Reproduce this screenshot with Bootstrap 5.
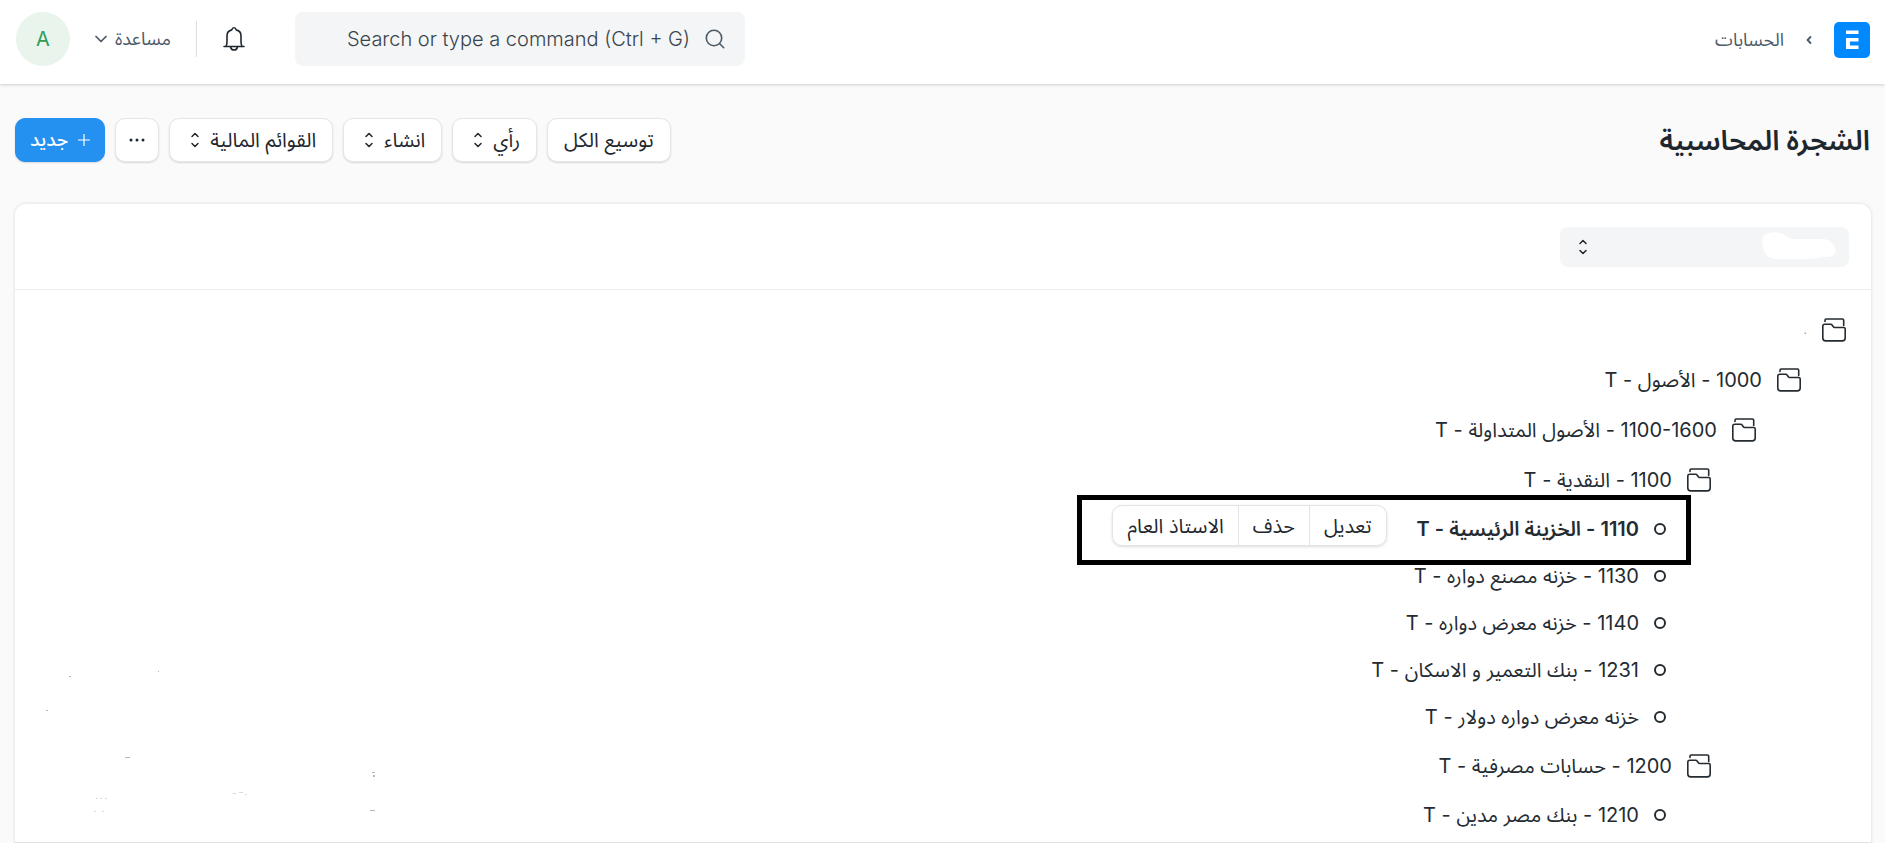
<!DOCTYPE html>
<html lang="ar" dir="rtl">
<head>
<meta charset="utf-8">
<meta name="viewport" content="width=device-width, initial-scale=1">
<title>الشجرة المحاسبية</title>
<link href="https://cdn.jsdelivr.net/npm/bootstrap@5.3.0/dist/css/bootstrap.min.css" rel="stylesheet">
<style>
  :root { --ink: #1f272e; --soft: #f4f5f6; --line: #ebeef0; }
  body { font-family: Inter, "Noto Sans Arabic", "Noto Sans", "DejaVu Sans", sans-serif; font-size: 20px; line-height: 28px; color: var(--ink); background: #fafafa; }
  svg { display: block; flex: none; fill: none; stroke: currentColor; stroke-linecap: round; stroke-linejoin: round; }
  .topbar { height: 84px; padding: 0 15px 5px 16px; background: #fff; box-shadow: 0 1px 3px rgba(0,0,0,.18); color: #4c5a67; font-size: 18px; }
  .topbar a { color: inherit; text-decoration: none; }
  .topbar .bell { color: var(--ink); }
  .crumb { gap: 22px; }
  .tools { gap: 25px; padding-bottom: 2px; }
  .searchbox { width: 450px; height: 54px; background: var(--soft); border-radius: 8px; padding: 0 20px; gap: 15px; margin-left: 24px; }
  .searchbox input { direction: ltr; text-align: right; border: 0; outline: 0; background: none; padding: 0; font-size: 20px; font-weight: 300; color: #3a444d; min-width: 0; }
  .searchbox input::placeholder { color: #3a444d; opacity: 1; }
  .rule { width: 1px; height: 36px; background: #dcdfe2; }
  .avatar-a { width: 54px; height: 54px; background: #e8f4ec; font-size: 20px; }
  .topbar .avatar-a { color: #2f9d58; }
  .pagehead { padding: 34px 15px 41px; }
  .pagehead h1 { font-size: 28px; line-height: 44px; font-weight: 600; }
  .tools-row { gap: 10px; }
  .tool { height: 44px; padding: 0 16px; gap: 10px; background: #fff; border: 1px solid #e4e6e8; border-radius: 10px; box-shadow: 0 1px 2px rgba(0,0,0,.14); font-size: 20px; line-height: 28px; color: var(--ink); }
  .tool:hover { background: #fff; border-color: #e4e6e8; }
  .tool.opens { padding-left: 20px; }
  .tool.more { padding: 0 13px; }
  .tool.blue, .tool.blue:hover { background: #2490ef; border-color: #2490ef; color: #fff; padding: 0 14px; font-size: 19px; font-weight: 500; }
  .sheet { margin: 0 13px 0 14px; background: #fff; border: 1px solid var(--line); border-bottom-color: #dfe1e3; border-radius: 12px 12px 0 0; box-shadow: 0 0 3px rgba(0,0,0,.08); }
  .filters { padding: 23px 22px 22px; border-bottom: 1px solid var(--line); }
  .company { width: 289px; }
  .company select { appearance: none; height: 40px; border: 0; border-radius: 8px; background: var(--soft); }
  .company .arrows { position: absolute; left: 18px; top: 12px; }
  .company .blot { position: absolute; right: 12px; top: 4px; fill: #fff; stroke: none; }
  .tree { padding: 15px 25px 0; --step: 45px; }
  .tree ul { list-style: none; margin: 0; padding: 0 var(--step) 0 0; }
  .tree > ul { padding: 0; }
  .branch + .branch { margin-top: 1px; }
  .node { height: 50px; gap: 15px; color: #242b31; }
  .leaf { height: 47px; }
  .node a { color: inherit; text-decoration: none; }
  .ring { width: 12px; height: 12px; border: 2px solid #242b31; border-radius: 50%; }
  .frame { position: absolute; inset: -10px -25px -13px auto; width: 614px; border: 5px solid #000; pointer-events: none; }
  .acts { margin-right: 15px; margin-bottom: 6px; direction: ltr; border-radius: 10px; box-shadow: 0 1px 3px rgba(0,0,0,.14); }
  .acts .btn { height: 41px; padding: 0 14px; font-size: 20px; line-height: 28px; color: var(--ink); border: 1px solid #e2e4e6; border-radius: 10px; }
  .specks { position: absolute; left: 30px; bottom: 24px; fill: #b4b6b8; stroke: none; }
  .faint { font-size: 12px; opacity: .5; }
</style>
</head>
<body class="d-flex flex-column min-vh-100">
<svg width="0" height="0" class="position-absolute" aria-hidden="true">
  <symbol id="folder" viewBox="0 0 24 24"><path stroke-width="1.600" d="M3 3.500V2.200c0-.8.4-1.200 1.200-1.200H20.500c.7 0 1.200.4 1.200 1.200V7.500M2.800 6.200H8.800c.6 0 1 .3 1.300.8l1.200 1.700c.3.500.7.800 1.300.8H21.700c1 0 1.500.6 1.500 1.500V20c0 1.800-1.100 2.900-2.900 2.900H3.700C1.900 22.900.8 21.800.8 20V8.200c0-1.200.8-2 2-2z"/></symbol>
  <symbol id="updown" viewBox="0 0 10 16"><path stroke-width="1.500" d="M2 4.500 5 1.500l3 3M2 11.500l3 3 3-3"/></symbol>
</svg>

<header class="topbar d-flex align-items-center justify-content-between">
  <nav class="crumb d-flex align-items-center" aria-label="مسار التنقل">
    <a href="#" aria-label="الرئيسية">
      <svg width="36" height="36" viewBox="0 0 36 36"><rect width="36" height="36" rx="5" fill="#0089ff" stroke="none"/><path fill="#fff" stroke="none" d="M12 8.500h12.500V12H12zM12 16h12.500v3.500H16V23.500h8.500V27H12z"/></svg>
    </a>
    <svg width="6" height="10" viewBox="0 0 6 10" stroke="#1f272e" stroke-width="1.800"><path d="M4.500 2 1.500 5l3 3"/></svg>
    <a href="#">الحسابات</a>
  </nav>
  <div class="tools d-flex align-items-center">
    <div class="searchbox d-flex align-items-center">
      <svg width="20" height="20" viewBox="0 0 20 20" stroke="#3a444d" stroke-width="1.600"><circle cx="9" cy="9" r="7.700"/><path d="m14.700 14.700 4 4"/></svg>
      <input type="text" class="flex-grow-1" aria-label="بحث" placeholder="Search or type a command (Ctrl + G)">
    </div>
    <button type="button" class="btn bell p-0 border-0" aria-label="الإشعارات">
      <svg width="24" height="26" viewBox="0 0 24 26" stroke-width="1.600"><path d="M2 20.500h20M4 20.500c.7-1.500 1-3 1-5V10c0-3 1.900-5.400 4.800-6.100.3-1.300 1.100-2.100 2.200-2.100s1.900.8 2.200 2.100c2.900.7 4.800 3.100 4.800 6.100v5.500c0 2 .3 3.500 1 5M8.500 21c.4 1.900 1.700 3 3.500 3s3.100-1.100 3.500-3"/></svg>
    </button>
    <div class="rule"></div>
    <a href="#" class="d-flex align-items-center gap-2">مساعدة
      <svg width="12" height="8" viewBox="0 0 12 8" stroke="#1f272e" stroke-width="1.700"><path d="m1 1.500 5 5 5-5"/></svg>
    </a>
    <a href="#" class="avatar-a rounded-circle d-flex align-items-center justify-content-center">A</a>
  </div>
</header>

<div class="pagehead d-flex align-items-center justify-content-between">
  <h1 class="m-0">الشجرة المحاسبية</h1>
  <div class="tools-row d-flex">
    <button type="button" class="btn tool">توسيع الكل</button>
    <button type="button" class="btn tool opens d-flex align-items-center">رأي <svg width="10" height="16"><use href="#updown"/></svg></button>
    <button type="button" class="btn tool opens d-flex align-items-center">انشاء <svg width="10" height="16"><use href="#updown"/></svg></button>
    <button type="button" class="btn tool opens d-flex align-items-center">القوائم المالية <svg width="10" height="16"><use href="#updown"/></svg></button>
    <button type="button" class="btn tool more d-flex align-items-center" aria-label="المزيد"><svg width="16" height="4" viewBox="0 0 16 4"><g fill="#1f272e" stroke="none"><circle cx="2" cy="2" r="1.500"/><circle cx="8" cy="2" r="1.500"/><circle cx="14" cy="2" r="1.500"/></g></svg></button>
    <button type="button" class="btn tool blue d-flex align-items-center"><svg width="12" height="12" viewBox="0 0 12 12" stroke-width="1.200"><path d="M6 0v12M0 6h12"/></svg> جديد</button>
  </div>
</div>

<main class="sheet flex-grow-1 position-relative">
  <div class="filters d-flex">
    <div class="company position-relative">
      <select class="w-100 d-block" aria-label="الشركة"><option></option></select>
      <svg class="arrows" width="10" height="16"><use href="#updown"/></svg>
      <svg class="blot" width="76" height="30" viewBox="0 0 76 30"><path d="M2 6C5 0 18 0 24 4c4 3 5 4 10 4h28c6 0 10 4 12 9 2 6-2 9-8 9-8 0-11 2-19 2H18C8 28 4 24 3 19 2 15 0 10 2 6z"/></svg>
    </div>
  </div>
  <div class="tree">
    <ul>
      <li class="branch">
        <div class="node d-flex align-items-center"><svg width="24" height="24"><use href="#folder"/></svg><a href="#" class="faint">.</a></div>
        <ul>
          <li class="branch">
            <div class="node d-flex align-items-center"><svg width="24" height="24"><use href="#folder"/></svg><a href="#">1000 - الأصول - T</a></div>
            <ul>
              <li class="branch">
                <div class="node d-flex align-items-center"><svg width="24" height="24"><use href="#folder"/></svg><a href="#">1100-1600 - الأصول المتداولة - T</a></div>
                <ul>
                  <li class="branch">
                    <div class="node d-flex align-items-center"><svg width="24" height="24"><use href="#folder"/></svg><a href="#">1100 - النقدية - T</a></div>
                    <ul>
                      <li class="node leaf d-flex align-items-center position-relative">
                        <span class="ring"></span><a href="#" class="fw-semibold">1110 - الخزينة الرئيسية - T</a>
                        <div class="acts btn-group">
                          <button type="button" class="btn">الاستاذ العام</button>
                          <button type="button" class="btn">حذف</button>
                          <button type="button" class="btn">تعديل</button>
                        </div>
                        <div class="frame"></div>
                      </li>
                      <li class="node leaf d-flex align-items-center"><span class="ring"></span><a href="#">1130 - خزنه مصنع دواره - T</a></li>
                      <li class="node leaf d-flex align-items-center"><span class="ring"></span><a href="#">1140 - خزنه معرض دواره - T</a></li>
                      <li class="node leaf d-flex align-items-center"><span class="ring"></span><a href="#">1231 - بنك التعمير و الاسكان - T</a></li>
                      <li class="node leaf d-flex align-items-center"><span class="ring"></span><a href="#">خزنه معرض دواره دولار - T</a></li>
                    </ul>
                  </li>
                  <li class="branch">
                    <div class="node d-flex align-items-center"><svg width="24" height="24"><use href="#folder"/></svg><a href="#">1200 - حسابات مصرفية - T</a></div>
                    <ul>
                      <li class="node leaf d-flex align-items-center"><span class="ring"></span><a href="#">1210 - بنك مصر مدين - T</a></li>
                    </ul>
                  </li>
                </ul>
              </li>
            </ul>
          </li>
        </ul>
      </li>
    </ul>
  </div>
  <svg class="specks" width="340" height="150" viewBox="0 0 340 150" aria-hidden="true"><path d="M24 8h2v1h-2zM1 42h2v1H1zM113 3h1v1h-1zM80 89h5v1h-5zM327 104h3v1h-3zM328 107h2v2h-2zM325 142h5v1h-5z"/><path opacity=".5" d="M51 130h2v1h-2zM55 130h2v1h-2zM60 130h2v1h-2zM49 143h2v1h-2zM57 143h2v1h-2zM188 125h3v1h-3zM194 124h4v1h-4zM200 126h2v1h-2z"/></svg>
</main>
<script src="https://cdn.jsdelivr.net/npm/bootstrap@5.3.0/dist/js/bootstrap.bundle.min.js"></script>
</body>
</html>
